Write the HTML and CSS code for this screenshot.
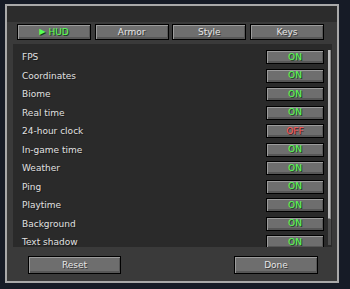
FILE: index.html
```html
<!DOCTYPE html>
<html>
<head>
<meta charset="utf-8">
<link rel="stylesheet" href="styles.css">
</head>
<body>
<div class="panel">
  <div class="header"></div>
  <div class="tabs">
    <div class="btn tab active"><span class="arrow">▶</span> HUD</div>
    <div class="btn tab">Armor</div>
    <div class="btn tab">Style</div>
    <div class="btn tab">Keys</div>
  </div>
  <div class="list">
    <div class="rows">
      <div class="row"><span class="label">FPS</span><span class="btn toggle on">ON</span></div>
      <div class="row"><span class="label">Coordinates</span><span class="btn toggle on">ON</span></div>
      <div class="row"><span class="label">Biome</span><span class="btn toggle on">ON</span></div>
      <div class="row"><span class="label">Real time</span><span class="btn toggle on">ON</span></div>
      <div class="row"><span class="label">24-hour clock</span><span class="btn toggle off">OFF</span></div>
      <div class="row"><span class="label">In-game time</span><span class="btn toggle on">ON</span></div>
      <div class="row"><span class="label">Weather</span><span class="btn toggle on">ON</span></div>
      <div class="row"><span class="label">Ping</span><span class="btn toggle on">ON</span></div>
      <div class="row"><span class="label">Playtime</span><span class="btn toggle on">ON</span></div>
      <div class="row"><span class="label">Background</span><span class="btn toggle on">ON</span></div>
      <div class="row"><span class="label">Text shadow</span><span class="btn toggle on">ON</span></div>
    </div>
    <div class="scrollbar"><div class="thumb"></div></div>
  </div>
  <div class="footer">
    <div class="btn big reset">Reset</div>
    <div class="btn big done">Done</div>
  </div>
</div>
</body>
</html>
```
FILE: styles.css
```css
html, body {
  margin: 0;
  padding: 0;
  background: #161b26;
  width: 350px;
  height: 289px;
  overflow: hidden;
  font-family: "DejaVu Sans", "Liberation Sans", sans-serif;
  font-size: 9px;
}

.panel {
  box-sizing: border-box;
  margin: 4px 0 0 5px;
  width: 334px;
  height: 279px;
  border: 2px solid #a9a9a9;
  background: #3a3a3a;
  display: flex;
  flex-direction: column;
}

.header {
  height: 16px;
  background: #2c2c2c;
}

.tabs {
  margin: 2px 0 0 10px;
  width: 307px;
  height: 16px;
  display: grid;
  grid-template-columns: repeat(4, 1fr);
  column-gap: 3.7px;
}

.btn {
  box-sizing: border-box;
  border: 1px solid #000;
  background: #6e6e6e;
  box-shadow: inset 1px 1px 0 #9c9c9c, inset -1px -2px 0 #565656;
  color: #e6e6e6;
  text-shadow: 1px 1px 0 #3a3a3a;
  display: flex;
  align-items: center;
  justify-content: center;
  line-height: 1;
}

.tab.active {
  color: #55ff55;
  text-shadow: 1px 1px 0 #153f15;
}

.arrow {
  font-size: 8px;
  margin-right: 3px;
}

.list {
  margin: 4px 5px 0 6px;
  height: 203px;
  background: #2a2a2a;
  display: flex;
  overflow: hidden;
}

.rows {
  flex: 1;
  padding: 4px 4px 0 9px;
}

.row {
  height: 18.5px;
  display: flex;
  align-items: center;
  justify-content: space-between;
}

.label {
  color: #e0e0e0;
  text-shadow: 1px 1px 0 #1a1a1a;
}

.toggle {
  width: 58px;
  height: 14px;
}

.toggle.on {
  color: #55ff55;
  text-shadow: 1px 1px 0 #1e4a1e;
}

.toggle.off {
  color: #ff5555;
  text-shadow: 1px 1px 0 #4a1e1e;
}

.scrollbar {
  width: 3px;
  margin: 6px 1px 2px 0;
  background: #4e4e4e;
}

.thumb {
  height: 169px;
  background: #bdbdbd;
  box-shadow: inset -1px -1px 0 #888;
}

.footer {
  margin-top: 9px;
  padding: 0 19px 0 21px;
  display: flex;
  justify-content: space-between;
}

.big {
  height: 18px;
}

.reset {
  width: 93px;
}

.done {
  width: 84px;
}
```
